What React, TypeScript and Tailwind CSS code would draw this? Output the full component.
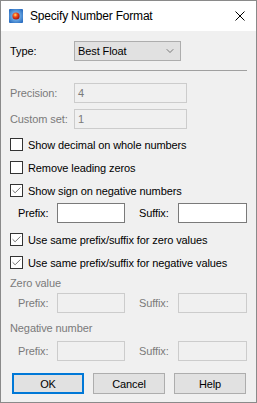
import { Check, ChevronDown } from 'lucide-react';

const font = { fontFamily: '"Liberation Sans", Arial, sans-serif' };

function AppIcon() {
  return (
    <svg width="14" height="14" viewBox="0 0 14 14">
      <defs>
        <radialGradient id="bg" cx="50%" cy="50%" r="70%">
          <stop offset="0%" stopColor="#9fd8ff" />
          <stop offset="100%" stopColor="#1a5fb8" />
        </radialGradient>
        <radialGradient id="ball" cx="40%" cy="35%" r="65%">
          <stop offset="0%" stopColor="#ffe36b" />
          <stop offset="45%" stopColor="#f04a1a" />
          <stop offset="100%" stopColor="#a3120a" />
        </radialGradient>
      </defs>
      <rect x="0" y="0" width="14" height="14" rx="1" fill="url(#bg)" />
      <circle cx="7" cy="7" r="3.6" fill="url(#ball)" />
    </svg>
  );
}

function Checkbox({ label, checked }: { label: string; checked?: boolean }) {
  return (
    <div className="flex h-[23px] items-center gap-[5px] whitespace-nowrap">
      <div className="flex h-[13px] w-[13px] shrink-0 items-center justify-center border border-[#333333] bg-white">
        {checked && <Check className="h-[11px] w-[11px] text-[#333333]" strokeWidth={1.5} />}
      </div>
      <span>{label}</span>
    </div>
  );
}

function FixRow({ disabled }: { disabled?: boolean }) {
  const box = disabled
    ? 'h-[20px] border border-[#cccccc] bg-[#f0f0f0]'
    : 'h-[20px] border border-[#7a7a7a] bg-white';
  return (
    <div className={`flex items-center whitespace-nowrap ${disabled ? 'text-[#7a7a7a]' : ''}`}>
      <span className="ml-[8px] w-[39px]">Prefix:</span>
      <div className={`w-[68px] ${box}`} />
      <span className="ml-[14px] w-[39px]">Suffix:</span>
      <div className={`w-[69px] ${box}`} />
    </div>
  );
}

export default function App() {
  return (
    <div
      className="flex h-[403px] w-[257px] flex-col border border-[#8a8a8a] bg-[#f0f0f0] text-[11px] leading-[16px] tracking-[-0.1px] text-black"
      style={font}
    >
      <div className="flex h-[30px] items-center bg-white">
        <div className="ml-[8px] mr-[7px] flex">
          <AppIcon />
        </div>
        <span className="text-[12px] tracking-[-0.2px]">Specify Number Format</span>
        <svg className="ml-auto mr-[11px]" width="10" height="10" viewBox="0 0 10 10">
          <path d="M0.5 0.5 L9.5 9.5 M9.5 0.5 L0.5 9.5" stroke="#000" strokeWidth="1" />
        </svg>
      </div>

      <div className="flex flex-col px-[9px]">
        <div className="mt-[10px] flex items-center">
          <span className="w-[64px]">Type:</span>
          <div className="flex h-[20px] w-[107px] items-center border border-[#adadad] bg-[#e1e1e1] pl-[3px]">
            <span>Best Float</span>
            <ChevronDown className="ml-auto mr-[4px] h-[12px] w-[12px] text-[#555]" strokeWidth={1.5} />
          </div>
        </div>

        <div className="mt-[9px] border-t border-[#a0a0a0]" />

        <div className="mt-[12px] flex items-center whitespace-nowrap text-[#7a7a7a]">
          <span className="w-[64px]">Precision:</span>
          <div className="flex h-[20px] w-[113px] items-center border border-[#cccccc] pl-[3px]">4</div>
        </div>
        <div className="mt-[6px] flex items-center whitespace-nowrap text-[#7a7a7a]">
          <span className="w-[64px]">Custom set:</span>
          <div className="flex h-[20px] w-[113px] items-center border border-[#cccccc] pl-[3px]">1</div>
        </div>

        <div className="mt-[4px] flex flex-col">
          <Checkbox label="Show decimal on whole numbers" />
          <Checkbox label="Remove leading zeros" />
          <Checkbox label="Show sign on negative numbers" checked />
        </div>

        <div className="mt-[1px]">
          <FixRow />
        </div>

        <div className="mt-[5px] flex flex-col">
          <Checkbox label="Use same prefix/suffix for zero values" checked />
          <Checkbox label="Use same prefix/suffix for negative values" checked />
        </div>

        <span className="mt-[1px] text-[#7a7a7a]">Zero value</span>
        <div className="mt-[2px]">
          <FixRow disabled />
        </div>

        <span className="mt-[7px] text-[#7a7a7a]">Negative number</span>
        <div className="mt-[5px]">
          <FixRow disabled />
        </div>

        <div className="mt-[12px] ml-[2px] flex gap-[9px]">
          <button className="h-[21px] w-[72px] border-2 border-[#0078d7] bg-[#e1e1e1]">OK</button>
          <button className="h-[21px] w-[72px] border border-[#adadad] bg-[#e1e1e1]">Cancel</button>
          <button className="h-[21px] w-[72px] border border-[#adadad] bg-[#e1e1e1]">Help</button>
        </div>
      </div>
    </div>
  );
}
